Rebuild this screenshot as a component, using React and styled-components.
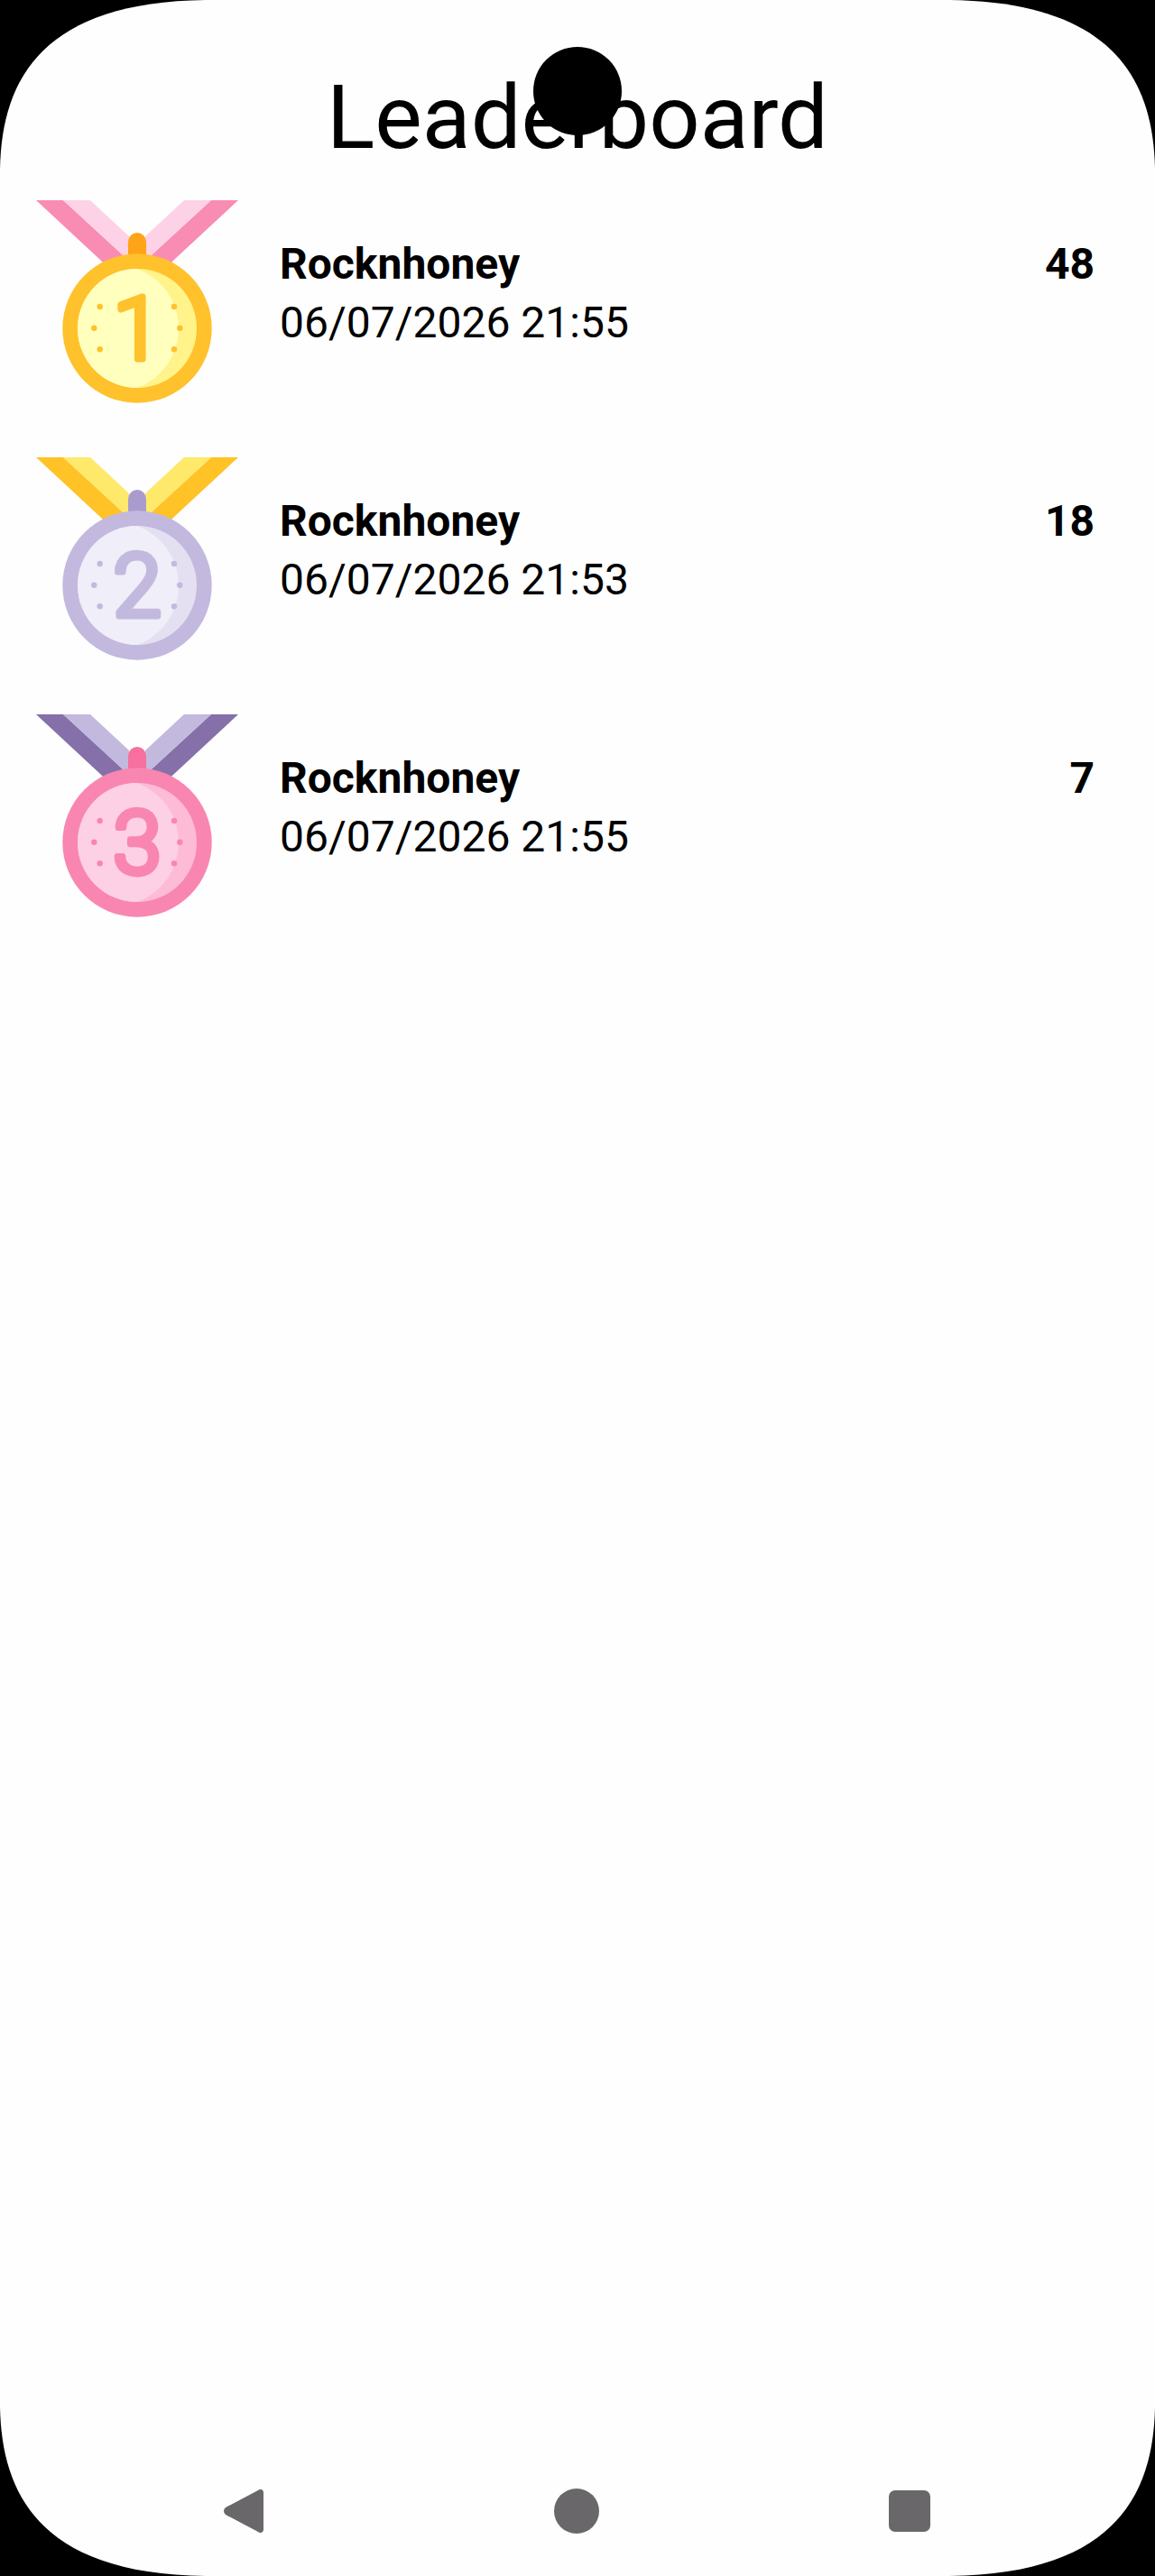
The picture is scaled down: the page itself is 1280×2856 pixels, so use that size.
import React from 'react'
import styled, { createGlobalStyle } from 'styled-components'

const GlobalStyle = createGlobalStyle`
  html, body {
    margin: 0;
    padding: 0;
    background: #000;
  }
`

const Screen = styled.div`
  position: relative;
  width: 1280px;
  height: 2856px;
  display: flex;
  flex-direction: column;
  background: #fefefe;
  clip-path: path('M0 187C2 85 50 2 228 0H1052C1230 2 1278 85 1280 187V2669C1278 2771 1230 2854 1052 2856H228C50 2854 2 2771 0 2669Z');
  font-family: Roboto, "Liberation Sans", sans-serif;
  color: #000;
`

const Camera = styled.div`
  position: absolute;
  top: 52px;
  left: 591px;
  width: 98px;
  height: 98px;
  border-radius: 50%;
  background: #000;
`

const Title = styled.h1`
  margin: 0;
  height: 222px;
  padding-top: 73px;
  box-sizing: border-box;
  font-size: 99px;
  font-weight: 400;
  line-height: 115px;
  text-align: center;
`

const List = styled.div`
  flex: 1;
  display: flex;
  flex-direction: column;
  padding: 0 67px 0 40px;
`

const Row = styled.div`
  height: 285px;
  display: flex;
  align-items: flex-start;
  gap: 46px;
`

const MedalSvg = styled.svg`
  width: 224px;
  height: 225px;
  flex: none;
`

const Info = styled.div`
  flex: 1;
  padding-top: 38px;
  font-size: 48px;
  line-height: 65px;
`

const TopLine = styled.div`
  display: flex;
  justify-content: space-between;
  font-weight: 700;
`

const NavBar = styled.div`
  height: 97px;
  padding-left: 247px;
  box-sizing: border-box;
  display: flex;
  align-items: flex-start;
  gap: 321px;
`

const NavSlot = styled.div`
  height: 50px;
  display: flex;
  align-items: center;
`

const NavBack = styled.svg`
  width: 46px;
  height: 50px;
`

const NavHome = styled.div`
  width: 50px;
  height: 50px;
  border-radius: 50%;
  background: #69676a;
`

const NavRecent = styled.div`
  width: 46px;
  height: 46px;
  border-radius: 7px;
  background: #69676a;
`

const Medal = ({ digit, c }) => (
  <MedalSvg viewBox="0 0 224 225">
    <path fill={c.ribbon} d="M0 0H30L105 69 85 79Z" />
    <path fill={c.ribbonLight} d="M30 0H60L103 40V69H105Z" />
    <path fill={c.ribbon} d="M224 0H194L119 69 139 79Z" />
    <path fill={c.ribbonLight} d="M194 0H164L121 40V69H119Z" />
    <path fill={c.loop} d="M102 62V46a10 10 0 0 1 20 0V62Z" />
    <circle cx="112" cy="142" r="82.7" fill={c.ring} />
    <circle cx="112" cy="142" r="66" fill={c.shade} />
    <path fill={c.inner} d="M112 76A66 66 0 0 0 112 208A70.3 70.3 0 0 0 112 76Z" />
    <g fill={c.ring}>
      <circle cx="70.7" cy="118" r="3.2" />
      <circle cx="64.3" cy="141.7" r="3.2" />
      <circle cx="70.7" cy="165.3" r="3.2" />
      <circle cx="153" cy="118" r="3.2" />
      <circle cx="159.3" cy="141.7" r="3.2" />
      <circle cx="153" cy="165.3" r="3.2" />
    </g>
    <text
      x="112"
      y="175.5"
      textAnchor="middle"
      fontFamily="Roboto, sans-serif"
      fontSize="96"
      fontWeight="300"
      fill={c.ring}
      stroke={c.ring}
      strokeWidth="7"
      strokeLinejoin="round"
    >
      {digit}
    </text>
  </MedalSvg>
)

const palettes = {
  gold: { ribbon: '#f98cb3', ribbonLight: '#fdd2e6', loop: '#ffa418', ring: '#ffc12c', inner: '#ffffbe', shade: '#fff38a' },
  silver: { ribbon: '#ffc227', ribbonLight: '#ffe96b', loop: '#a99ccd', ring: '#c3b9de', inner: '#f0eef8', shade: '#e4e0f2' },
  bronze: { ribbon: '#8570a9', ribbonLight: '#c3b9de', loop: '#f7709f', ring: '#f986b0', inner: '#fdd0e5', shade: '#fdbbd6' },
}

const rows = [
  { digit: '1', c: palettes.gold, name: 'Rocknhoney', date: '06/07/2026 21:55', score: 48 },
  { digit: '2', c: palettes.silver, name: 'Rocknhoney', date: '06/07/2026 21:53', score: 18 },
  { digit: '3', c: palettes.bronze, name: 'Rocknhoney', date: '06/07/2026 21:55', score: 7 },
]

export default function App() {
  return (
    <Screen>
      <GlobalStyle />
      <Title>Leaderboard</Title>
      <Camera />
      <List>
        {rows.map((r) => (
          <Row key={r.digit}>
            <Medal digit={r.digit} c={r.c} />
            <Info>
              <TopLine>
                <span>{r.name}</span>
                <span>{r.score}</span>
              </TopLine>
              <div>{r.date}</div>
            </Info>
          </Row>
        ))}
      </List>
      <NavBar>
        <NavSlot>
          <NavBack viewBox="0 0 46 50">
            <path fill="#69676a" d="M45 4V46a3.5 3.5 0 0 1-6 2L3 29a5 5 0 0 1 0-8L39 2a3.5 3.5 0 0 1 6 2Z" />
          </NavBack>
        </NavSlot>
        <NavSlot><NavHome /></NavSlot>
        <NavSlot><NavRecent /></NavSlot>
      </NavBar>
    </Screen>
  )
}
